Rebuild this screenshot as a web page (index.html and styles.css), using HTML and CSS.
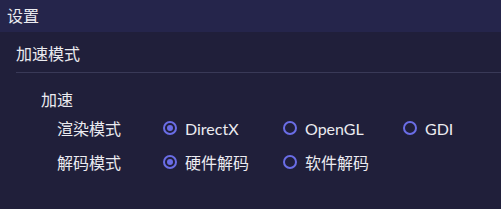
FILE: index.html
```html
<!DOCTYPE html>
<html lang="zh">
<head>
<meta charset="utf-8">
<link rel="stylesheet" href="styles.css">
</head>
<body>
<div class="header">设置</div>
<div class="content">
  <div class="section-title">加速模式</div>
  <div class="divider"></div>
  <div class="group-title">加速</div>
  <div class="rows">
    <div class="row">
      <div class="label">渲染模式</div>
      <div class="opt checked"><span class="radio"></span><span class="txt">DirectX</span></div>
      <div class="opt"><span class="radio"></span><span class="txt">OpenGL</span></div>
      <div class="opt"><span class="radio"></span><span class="txt">GDI</span></div>
    </div>
    <div class="row">
      <div class="label">解码模式</div>
      <div class="opt checked"><span class="radio"></span><span class="txt">硬件解码</span></div>
      <div class="opt"><span class="radio"></span><span class="txt">软件解码</span></div>
    </div>
  </div>
</div>
</body>
</html>
```
FILE: styles.css
```css
html, body {
  margin: 0;
  padding: 0;
  background: #201f3a;
  color: #ebebf0;
  font-family: Lato, "Noto Sans CJK SC", sans-serif;
  font-size: 16px;
}
.header {
  height: 32px;
  line-height: 32px;
  padding-left: 7px;
  background: #25254b;
}
.content {
  padding-left: 16px;
}
.section-title {
  height: 40px;
  line-height: 44px;
}
.divider {
  height: 1px;
  background: #393957;
}
.group-title {
  padding-left: 25px;
  height: 38px;
  line-height: 54px;
}
.rows {
  padding-left: 41px;
  display: flex;
  flex-direction: column;
}
.row {
  display: grid;
  grid-template-columns: 106px 120px 120px 120px;
  height: 34px;
  align-items: center;
}
.opt {
  display: flex;
  align-items: center;
  gap: 8px;
}
.radio {
  box-sizing: border-box;
  width: 14px;
  height: 14px;
  border: 2px solid #6a6de6;
  border-radius: 50%;
  display: flex;
  align-items: center;
  justify-content: center;
}
.opt.checked .radio::after {
  content: "";
  width: 6px;
  height: 6px;
  border-radius: 50%;
  background: #6a6de6;
}
```
